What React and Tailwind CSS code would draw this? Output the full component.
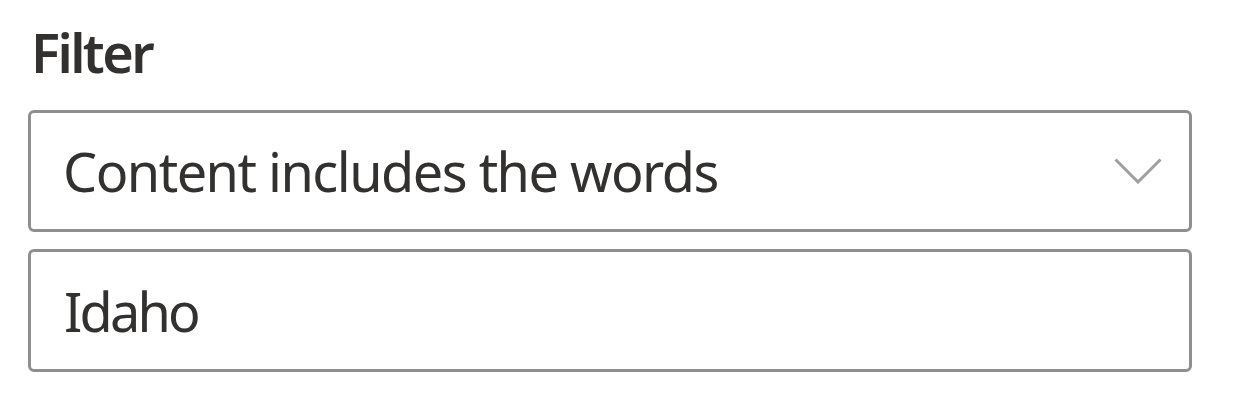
export default function App() {
  return (
    <div
      className="w-[1234px] h-[406px] bg-white pl-[28px] pr-[42px] pt-[14px] text-[#323130]"
      style={{ fontFamily: '"Noto Sans", "Open Sans", sans-serif' }}
    >
      <div className="text-[54px] leading-[76px] font-semibold tracking-[-2.6px] pl-[3px]">Filter</div>
      <div className="mt-[20px] h-[122px] border-[3px] border-[#918f8d] rounded-[6px] flex items-center pl-[32px] pr-[27px]">
        <span className="flex-1 text-[54px] leading-[76px] tracking-[-1.5px]">Content includes the words</span>
        <svg width="48" height="26" viewBox="0 0 48 26" fill="none">
          <path d="M1.5 1.5 L24 24 L46.5 1.5" stroke="#a19f9d" strokeWidth="3" />
        </svg>
      </div>
      <div className="mt-[17px] h-[123px] border-[3px] border-[#918f8d] rounded-[6px] flex items-center pl-[33px]">
        <span className="text-[54px] leading-[76px] tracking-[-2.8px]">Idaho</span>
      </div>
    </div>
  );
}
